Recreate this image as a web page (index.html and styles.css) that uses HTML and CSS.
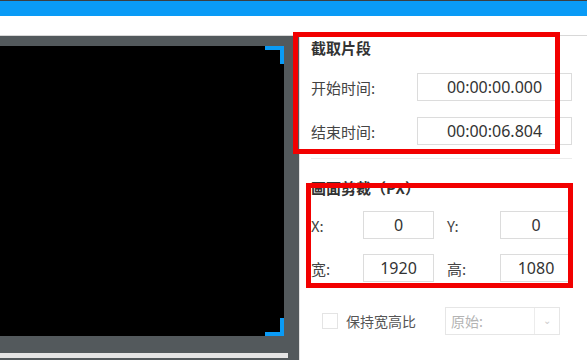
FILE: index.html
```html
<!DOCTYPE html>
<html lang="zh-CN">
<head>
  <meta charset="UTF-8">
  <title>截取片段</title>
  <link rel="stylesheet" href="styles.css">
</head>
<body>
  <!-- Window title bar -->
  <div class="titlebar"></div>
  <div class="toolbar"></div>

  <div class="main">
    <!-- Left: video preview -->
    <div class="preview">
      <div class="video">
        <span class="corner corner-top"></span>
        <span class="corner corner-bottom"></span>
      </div>
      <div class="timeline"></div>
    </div>

    <!-- Right: settings panel -->
    <div class="panel">
      <div class="section">
        <div class="section-title">截取片段</div>
        <div class="time-row">
          <span class="label">开始时间:</span>
          <div class="field">00:00:00.000</div>
        </div>
        <div class="time-row">
          <span class="label">结束时间:</span>
          <div class="field">00:00:06.804</div>
        </div>
      </div>

      <div class="section crop">
        <div class="section-title">画面剪裁（PX）</div>
        <div class="crop-grid">
          <span class="label">X:</span>
          <div class="field">0</div>
          <span class="label label-pad">Y:</span>
          <div class="field">0</div>
          <span class="label">宽:</span>
          <div class="field">1920</div>
          <span class="label label-pad">高:</span>
          <div class="field">1080</div>
        </div>
      </div>

      <div class="ratio-row">
        <span class="checkbox"></span>
        <span class="ratio-label">保持宽高比</span>
        <div class="select">
          <span class="select-text">原始:</span>
          <span class="select-arrow">⌄</span>
        </div>
      </div>
    </div>

    <!-- Red annotation boxes -->
    <div class="mark mark-time"></div>
    <div class="mark mark-crop"></div>
  </div>
</body>
</html>
```

FILE: styles.css
```css
/* Reset */
html, body {
  margin: 0;
  padding: 0;
  width: 100%;
  height: 100%;
  overflow: hidden;
  background: #fff;
  font-family: "Noto Sans CJK SC", "Noto Sans", sans-serif;
}
/* Top bars */
.titlebar {
  height: 1px;
  background: #3c3f41;
}
.toolbar {
  height: 15px;
  background: #0a9bf6;
  border-bottom: 19px solid #fff;
}
/* Main area */
.main {
  position: relative;
  display: flex;
  height: 325px;
  border-top: 1px solid #d8d8d8;
}
/* Preview column */
.preview {
  width: 299px;
  background: #53595c;
  padding-top: 10px;
  box-sizing: border-box;
}
.video {
  position: relative;
  width: 284px;
  height: 290px;
  background: #000;
}
.corner {
  position: absolute;
  right: 0;
  width: 15px;
  height: 14px;
  border-right: 4px solid #0a9bf6;
}
.corner-top {
  top: 0;
  border-top: 4px solid #0a9bf6;
}
.corner-bottom {
  bottom: 0;
  border-bottom: 4px solid #0a9bf6;
}
.timeline {
  width: 288px;
  height: 5px;
  margin-top: 17px;
  background: #e4e4e4;
}
/* Settings panel */
.panel {
  flex: 1;
  border-left: 1px solid #e2e2e2;
  padding: 0 15px 0 11px;
  color: #444;
  font-size: 15px;
}
.section {
  padding-bottom: 13px;
  border-bottom: 1px solid #ececec;
}
.section-title {
  font-weight: bold;
  color: #333;
  line-height: 20px;
  margin-top: 2px;
  margin-bottom: 15px;
}
.time-row {
  display: flex;
  align-items: center;
  justify-content: space-between;
  margin-bottom: 16px;
}
.time-row:last-child {
  margin-bottom: 0;
}
.field {
  height: 26px;
  border: 1px solid #dcdcdc;
  display: flex;
  align-items: center;
  justify-content: center;
  font-family: "Noto Sans", "Noto Sans CJK SC", sans-serif;
  font-size: 16px;
  color: #333;
}
.time-row .field {
  width: 153px;
}
.crop {
  border-bottom: none;
  padding-top: 17px;
}
.crop .section-title {
  margin-bottom: 13px;
}
.crop-grid {
  display: grid;
  grid-template-columns: 52px 71px 66px 72px;
  row-gap: 15px;
  align-items: center;
}
.label-pad {
  padding-left: 13px;
}
/* Aspect ratio row */
.ratio-row {
  display: flex;
  align-items: center;
  margin-top: 12px;
  padding-left: 11px;
  font-size: 14px;
}
.checkbox {
  width: 14px;
  height: 14px;
  border: 1px solid #e4e4e4;
}
.ratio-label {
  margin-left: 8px;
  color: #555;
}
.select {
  display: flex;
  width: 113px;
  height: 26px;
  margin-left: 29px;
  border: 1px solid #e6e6e6;
  color: #b4b4b4;
}
.select-text {
  flex: 1;
  padding-left: 5px;
  line-height: 26px;
}
.select-arrow {
  width: 24px;
  border-left: 1px solid #ececec;
  text-align: center;
  font-size: 10px;
  line-height: 24px;
  color: #ccc;
}
/* Red annotation rectangles */
.mark {
  position: absolute;
  border: 5px solid #f20000;
  box-sizing: border-box;
}
.mark-time {
  left: 293px;
  top: -4px;
  width: 267px;
  height: 122px;
}
.mark-crop {
  left: 306px;
  top: 147px;
  width: 267px;
  height: 105px;
}
```
